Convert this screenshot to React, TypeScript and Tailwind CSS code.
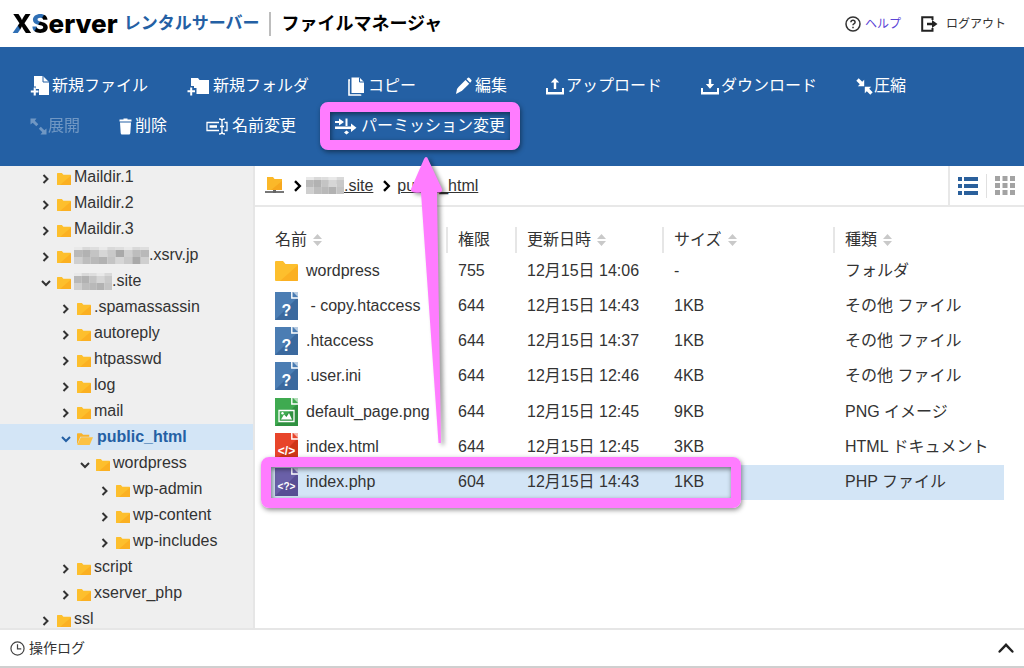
import React, { useState } from 'react';
import { clsx } from 'clsx';

type IconProps = { className?: string };

const Chevron: React.FC<IconProps & { dir?: 'right' | 'down' | 'up' }> = ({ className, dir = 'right' }) => (
  <svg viewBox="0 0 10 10" className={className} fill="none" stroke="currentColor" strokeWidth={dir === 'up' ? 1.5 : 2}>
    {dir === 'right' && <path d="M2.5 1 6.5 5 2.5 9" />}
    {dir === 'down' && <path d="M1 3 5 7 9 3" />}
    {dir === 'up' && <path d="M1 7.2 5 3 9 7.2" strokeLinecap="round" />}
  </svg>
);

const Folder: React.FC<IconProps> = ({ className }) => (
  <svg viewBox="0 0 23 20" className={className} preserveAspectRatio="none">
    <path d="M0 1Q0 0 1 0H8L10.500 3H22Q23 3 23 4V19Q23 20 22 20H1Q0 20 0 19Z" fill="#fdbf2d" />
    <path d="M23 4V19Q23 20 22 20H5Z" fill="#fbb022" />
  </svg>
);

const FolderOpen: React.FC<IconProps> = ({ className }) => (
  <svg viewBox="0 0 17 14" className={className}>
    <path d="M0 13V1.500Q0 .8.8.8H5L6.500 2.500H13V4.500H3.500L0 13Z" fill="#f9b32a" />
    <path d="M4 5.200H17L13.500 13.500H.3Z" fill="#fcc244" />
  </svg>
);

const RootFolder: React.FC<IconProps> = ({ className }) => (
  <svg viewBox="0 0 19 17" className={className}>
    <path d="M2 0H8L9.500 2H17V13H2Z" fill="#fbb829" />
    <path d="M17 4V13H6Z" fill="#f7a81e" />
    <path d="M0 14H19V16H0Z" fill="#777" />
    <path d="M8 13H11V16H8Z" fill="#666" />
  </svg>
);

const NewFileIcon = () => (
  <svg viewBox="0 0 20 22" className="h-[22px] w-5" fill="currentColor">
    <path d="M4 1H13L19 7V20H9V14H6V11.500H4Z" />
    <path d="M13 1V7H19" fill="none" stroke="#2460a4" strokeWidth="1" />
    <path d="M3.700 12.500H5.800V15.500H8.500V17.500H5.800V20.500H3.700V17.500H.8V15.500H3.700Z" />
  </svg>
);

const NewFolderIcon = () => (
  <svg viewBox="0 0 23 20" className="h-5 w-[23px]" fill="currentColor">
    <path d="M4 2H11L12.500 4H22V18H9.500V12H7V10H4Z" />
    <path d="M3.200 11.500H5.200V14.300H8V16.300H5.200V19.500H3.200V16.300H.5V14.300H3.200Z" />
  </svg>
);

const CopyIcon = () => (
  <svg viewBox="0 0 17 19" className="h-[19px] w-[17px]">
    <path d="M3.500.500H11.500L16 5V16H3.500Z" fill="currentColor" />
    <path d="M11.500.500V5H16" fill="none" stroke="#2460a4" />
    <path d="M2 3H1V18H12.500V17.500" fill="none" stroke="currentColor" strokeWidth="1.600" />
  </svg>
);

const EditIcon = () => (
  <svg viewBox="0 0 17 18" className="h-[18px] w-[17px]" fill="currentColor">
    <path d="M3.500 10 10.500 3 14.200 6.700 7 13.800 1 17 2 12Z" />
    <path d="M11.500 2 13 .8Q13.800.2 14.500 1L16.200 2.800Q17 3.600 16.200 4.400L15.100 5.700Z" />
  </svg>
);

const TrayIcon: React.FC<{ up?: boolean }> = ({ up }) => (
  <svg viewBox="0 0 18 18" className="size-[18px]" fill="currentColor">
    <path d="M0 11H2V15H16V11H18V17.500H0Z" />
    {up ? <path d="M9 1 13.200 5.500H10.200V12H7.800V5.500H4.800Z" /> : <path d="M7.800 2H10.200V7H13.200L9 11.800 4.800 7H7.800Z" />}
  </svg>
);

const CompressIcon = () => (
  <svg viewBox="0 0 17 17" className="size-[17px]" fill="currentColor">
    <path d="M8.200 8.200H1.800L3.800 6.200.3 2.700 2.700.3 6.200 3.800 8.200 1.800Z" />
    <path d="M8.800 8.800H15.200L13.200 10.800 16.700 14.300 14.300 16.700 10.800 13.200 8.800 15.200Z" />
  </svg>
);

const ExpandIcon = () => (
  <svg viewBox="0 0 17 17" className="size-[17px]" fill="currentColor">
    <path d="M.5.500H6.500L4.800 2.700 8.300 6.200 6.300 8.200 2.700 4.800.5 6.500Z" />
    <path d="M16.500 16.500H10.500L12.300 14.300 8.800 10.800 10.800 8.800 14.300 12.300 16.500 10.500Z" />
  </svg>
);

const TrashIcon = () => (
  <svg viewBox="0 0 13 17" className="h-[17px] w-[13px]" fill="currentColor">
    <path d="M4.500 1.500V.5H8.500V1.500H12.500V3.500H.5V1.500Z" />
    <path d="M1 4.500H12L11.300 15Q11.200 16.500 10 16.500H3Q1.800 16.500 1.700 15Z" />
  </svg>
);

const RenameIcon = () => (
  <svg viewBox="0 0 22 17" className="h-[17px] w-[22px]" fill="none" stroke="currentColor" strokeWidth="1.300">
    <path d="M13 4.500H1V12.500H13M18.500 4.500H21V12.500H18.500" />
    <path d="M3.500 8.500H11" strokeWidth="2.600" />
    <path d="M13 1Q16 1 16 3V14Q16 16 13 16M19 1Q16 1 16 3M16 14Q16 16 19 16M14 8.500H18" />
  </svg>
);

const PermissionIcon = () => (
  <svg viewBox="0 0 22 18" className="h-[18px] w-[22px]" fill="currentColor">
    <path d="M0 4H4V1.500L9 5 4 8.500V6H0ZM10.500 1.500H12.500V9H10.500Z" />
    <path d="M0 9.500H16V6.500L21.500 10.800 16 15V12H0ZM11.500 13.500 14 15.500 11.500 17.500 9 15.500Z" />
  </svg>
);

const HelpIcon = () => (
  <svg viewBox="0 0 16 16" className="size-4" fill="none" stroke="#333" strokeWidth="1.500">
    <circle cx="8" cy="8" r="7" />
    <path d="M5.900 6.300Q6 4.300 8 4.300T10.100 6.200Q10.100 7.300 8.900 7.900 8 8.400 8 9.300M8 10.700V12.200" />
  </svg>
);

const LogoutIcon = () => (
  <svg viewBox="0 0 17 16" className="h-4 w-[17px]">
    <path d="M11.500 4V1.200H1.200V14.800H11.500V12" fill="none" stroke="#222" strokeWidth="2" />
    <path d="M6 6.800H11V4L16.500 8 11 12V9.200H6Z" fill="#222" />
  </svg>
);

const ListIcon = () => (
  <svg viewBox="0 0 20 18" className="h-[18px] w-5" fill="#2a609c">
    <path d="M0 0H4V4H0ZM6 0H20V4H6ZM0 7H4V11H0ZM6 7H20V11H6ZM0 14H4V18H0ZM6 14H20V18H6Z" />
  </svg>
);

const GridIcon = () => (
  <svg viewBox="0 0 20 19" className="h-[19px] w-5" fill="#a3a3a3">
    <path d="M0 0H5V5H0ZM7.500 0H12.500V5H7.500ZM15 0H20V5H15ZM0 7H5V12H0ZM7.500 7H12.500V12H7.500ZM15 7H20V12H15ZM0 14H5V19H0ZM7.500 14H12.500V19H7.500ZM15 14H20V19H15Z" />
  </svg>
);

const SortIcon = () => (
  <svg viewBox="0 0 9 12" className="h-3 w-[9px]" fill="#c9c9c9">
    <path d="M4.500 0 9 5H0ZM4.500 12 0 7H9Z" />
  </svg>
);

type FileKind = 'folder' | 'other' | 'image' | 'html' | 'php';

const fileColors = {
  other: ['#4b7db3', '#3b699e'],
  image: ['#3faa50', '#2f9140'],
  html: ['#e8452a', '#cf3618'],
  php: ['#6a60a8', '#584e94'],
};

const FileIcon: React.FC<{ kind: FileKind }> = ({ kind }) => {
  if (kind === 'folder') return <Folder className="h-5 w-[23px]" />;
  const [base, shade] = fileColors[kind];
  return (
    <svg viewBox="0 0 23 28" className="h-7 w-[23px]">
      <path d="M0 0H23V28H0Z" fill={base} />
      <path d="M23 5V28H0Z" fill={shade} />
      <path d="M16.800 0V6H23" fill="none" stroke="#fff" strokeWidth="1.400" />
      <path d="M18 0 23 5V0Z" fill="#fff" fillOpacity=".6" />
      {kind === 'other' && <text x="11.500" y="24" textAnchor="middle" fontSize="16" fontWeight="700" fill="#fff">?</text>}
      {kind === 'html' && <text x="11.500" y="22" textAnchor="middle" fontSize="12" fontWeight="700" fill="#fff">&lt;/&gt;</text>}
      {kind === 'php' && <text x="11.500" y="22" textAnchor="middle" fontSize="10" fontWeight="700" fill="#fff">&lt;?&gt;</text>}
      {kind === 'image' && (
        <g>
          <path d="M4 12.500H19V23.500H4Z" fill="none" stroke="#fff" strokeWidth="1.300" />
          <path d="M6 21.500 9 16.500 11.500 19 14 15 17 21.500Z" fill="#fff" />
          <circle cx="7.500" cy="15.300" r="1.200" fill="#fff" />
        </g>
      )}
    </svg>
  );
};

// pixelated cover for private names
const shades = ['#c4c4c4', '#a9a9a9', '#b9b9b9', '#d6d6d6', '#cfcfcf', '#b2b2b2', '#c9c9c9', '#bdbdbd'];

const Mosaic: React.FC<{ cols: number; className: string }> = ({ cols, className }) => (
  <svg viewBox={`0 0 ${cols * 8} 17`} className={className} preserveAspectRatio="none">
    {Array.from({ length: cols * 3 }, (_, i) => {
      const row = Math.floor(i / cols);
      const col = i % cols;
      const fill = row === 0 ? ['#e9e9e9', '#d9d9d9', '#dedede'][col % 3] : shades[(col * 3 + row * 2) % 8];
      return <rect key={i} x={col * 8} y={[0, 3, 10][row]} width="8" height="7" fill={fill} />;
    })}
  </svg>
);

interface TreeNode {
  name: string;
  level: 0 | 1 | 2 | 3;
  open?: boolean;
  masked?: 'long' | 'short';
}

const tree: TreeNode[] = [
  { name: 'Maildir.1', level: 0 },
  { name: 'Maildir.2', level: 0 },
  { name: 'Maildir.3', level: 0 },
  { name: '.xsrv.jp', level: 0, masked: 'long' },
  { name: '.site', level: 0, open: true, masked: 'short' },
  { name: '.spamassassin', level: 1 },
  { name: 'autoreply', level: 1 },
  { name: 'htpasswd', level: 1 },
  { name: 'log', level: 1 },
  { name: 'mail', level: 1 },
  { name: 'public_html', level: 1, open: true },
  { name: 'wordpress', level: 2, open: true },
  { name: 'wp-admin', level: 3 },
  { name: 'wp-content', level: 3 },
  { name: 'wp-includes', level: 3 },
  { name: 'script', level: 1 },
  { name: 'xserver_php', level: 1 },
  { name: 'ssl', level: 0 },
];

const indents = ['pl-[41px]', 'pl-[61px]', 'pl-[80px]', 'pl-[100px]'];

const actions = [
  { label: '新規ファイル', icon: <NewFileIcon />, box: 'w-[22px]' },
  { label: '新規フォルダ', icon: <NewFolderIcon />, box: 'w-[26px]' },
  { label: 'コピー', icon: <CopyIcon />, box: 'w-5' },
  { label: '編集', icon: <EditIcon />, box: 'w-5' },
  { label: 'アップロード', icon: <TrayIcon up />, box: 'w-5' },
  { label: 'ダウンロード', icon: <TrayIcon />, box: 'w-5' },
  { label: '圧縮', icon: <CompressIcon />, box: 'w-[18px]' },
  { label: '展開', icon: <ExpandIcon />, box: 'w-[18px]', disabled: true },
  { label: '削除', icon: <TrashIcon />, box: 'w-4' },
  { label: '名前変更', icon: <RenameIcon />, box: 'w-[26px]' },
  { label: 'パーミッション変更', icon: <PermissionIcon />, box: 'w-[26px]', marked: true },
];

const files: { name: string; perm: string; date: string; size: string; type: string; kind: FileKind }[] = [
  { name: 'wordpress', perm: '755', date: '12月15日 14:06', size: '-', type: 'フォルダ', kind: 'folder' },
  { name: ' - copy.htaccess', perm: '644', date: '12月15日 14:43', size: '1KB', type: 'その他 ファイル', kind: 'other' },
  { name: '.htaccess', perm: '644', date: '12月15日 14:37', size: '1KB', type: 'その他 ファイル', kind: 'other' },
  { name: '.user.ini', perm: '644', date: '12月15日 12:46', size: '4KB', type: 'その他 ファイル', kind: 'other' },
  { name: 'default_page.png', perm: '644', date: '12月15日 12:45', size: '9KB', type: 'PNG イメージ', kind: 'image' },
  { name: 'index.html', perm: '644', date: '12月15日 12:45', size: '3KB', type: 'HTML ドキュメント', kind: 'html' },
  { name: 'index.php', perm: '604', date: '12月15日 14:43', size: '1KB', type: 'PHP ファイル', kind: 'php' },
];

const columns = [
  { label: '名前', width: 'w-[182px]', sortable: true },
  { label: '権限', width: 'w-[69px]' },
  { label: '更新日時', width: 'w-[147px]', sortable: true },
  { label: 'サイズ', width: 'w-[171px]', sortable: true },
  { label: '種類', width: '', sortable: true },
];

const frame =
  'pointer-events-none absolute z-10 rounded-lg border-[10px] border-[#ff7cff] shadow-[1px_2px_5px_rgba(0,0,0,0.45),inset_1px_2px_5px_rgba(0,0,0,0.5)]';

const Header = () => (
  <header className="flex h-[47px] shrink-0 items-center justify-between bg-white pr-[18px] pl-3">
    <h1 className="flex items-center font-bold whitespace-nowrap text-black">
      <span className="font-['Inter',sans-serif] text-[26px] leading-8 font-extrabold">
        <span className="bg-linear-to-tr from-[#2f6fb5] from-35% to-black to-40% bg-clip-text text-transparent">X</span>
        <span className="bg-linear-to-br from-[#2f6fb5] from-45% to-black to-50% bg-clip-text text-transparent">S</span>
        erver
      </span>
      <span className="ml-1.5 text-[17px] text-[#2460a4]">レンタルサーバー</span>
      <span className="mx-2.5 h-6 w-0.5 bg-[#bdbdbd]" />
      <span className="text-lg">ファイルマネージャ</span>
    </h1>
    <nav className="flex items-center gap-5 text-xs">
      <a href="#help" className="flex items-center gap-1 text-[#5b45d6]">
        <HelpIcon />
        ヘルプ
      </a>
      <a href="#logout" className="flex items-center gap-2 text-[#333]">
        <LogoutIcon />
        ログアウト
      </a>
    </nav>
  </header>
);

const Toolbar = () => (
  <div className="flex h-[119px] shrink-0 flex-wrap content-start gap-x-[39px] gap-y-4 bg-[#2460a4] pt-[27px] pr-16 pl-[30px] text-white">
    {actions.map((a) => (
      <button
        key={a.label}
        type="button"
        disabled={a.disabled}
        className={clsx('relative flex h-6 items-center text-base whitespace-nowrap', a.disabled && 'opacity-35')}
      >
        <span className={clsx('shrink-0', a.box)}>{a.icon}</span>
        {a.label}
        {a.marked && <span className={clsx(frame, '-inset-x-[15px] -inset-y-3')} />}
      </button>
    ))}
  </div>
);

const Sidebar: React.FC<{ current: string; onSelect: (name: string) => void }> = ({ current, onSelect }) => (
  <aside className="w-[255px] shrink-0 overflow-hidden border-r-2 border-[#e6e6e6] bg-[#efefef]">
    <ul className="-mt-0.5">
      {tree.map((node) => {
        const selected = node.name === current;
        return (
          <li key={node.name}>
            <button
              type="button"
              onClick={() => onSelect(node.name)}
              className={clsx(
                'flex h-[26px] w-full items-center text-base whitespace-nowrap',
                indents[node.level],
                selected ? 'bg-[#d3e5f6] font-bold text-[#2460a4]' : 'text-[#333]'
              )}
            >
              <Chevron dir={node.open ? 'down' : 'right'} className="mt-1 mr-1.5 size-2.5" />
              {selected ? <FolderOpen className="mt-1 mr-1 h-3.5 w-4" /> : <Folder className="mt-1 mr-[3px] h-3 w-3.5" />}
              {node.masked === 'long' && <Mosaic cols={9} className="h-[17px] w-[75px]" />}
              {node.masked === 'short' && <Mosaic cols={5} className="h-[17px] w-[38px]" />}
              {node.name}
            </button>
          </li>
        );
      })}
    </ul>
  </aside>
);

const Breadcrumb = () => (
  <div className="flex h-[41px] shrink-0 border-b-2 border-[#e8e8e8]">
    <nav className="flex flex-1 items-center pl-2.5 text-base text-[#333]">
      <RootFolder className="h-[17px] w-[19px]" />
      <Chevron className="mr-0.5 ml-2 size-3 text-black" />
      <Mosaic cols={5} className="h-[17px] w-[38px]" />
      <a href="#site" className="underline">.site</a>
      <Chevron className="mr-1 ml-2 size-3 text-black" />
      <a href="#public_html" className="underline">public_html</a>
    </nav>
    <div className="flex w-[76px] items-center border-l-2 border-[#e8e8e8] pl-2">
      <button type="button" aria-label="リスト表示">
        <ListIcon />
      </button>
      <span className="mx-2 h-6 w-px bg-[#e0e0e0]" />
      <button type="button" aria-label="アイコン表示">
        <GridIcon />
      </button>
    </div>
  </div>
);

const FileTable: React.FC<{ selected: string; onSelect: (name: string) => void }> = ({ selected, onSelect }) => (
  <div className="pt-5 pr-5 pl-2.5">
    <table className="h-[273px] w-full table-fixed text-left text-base text-[#333]">
      <thead>
        <tr className="h-[26px]">
          {columns.map((col, i) => (
            <th
              key={col.label}
              scope="col"
              className={clsx('p-0 pl-2.5 font-normal', col.width, i > 0 && 'border-l-2 border-[#e6e6e6]')}
            >
              <span className="flex items-center gap-1.5">
                {col.label}
                {col.sortable && <SortIcon />}
              </span>
            </th>
          ))}
        </tr>
      </thead>
      <tbody>
        {files.map((f) => (
          <tr
            key={f.name}
            onClick={() => onSelect(f.name)}
            className={clsx('h-[35px]', f.name === selected && 'bg-[#d3e5f6]')}
          >
            <td className="relative p-0 pl-2.5">
              <span className="flex items-center gap-2 whitespace-pre">
                <FileIcon kind={f.kind} />
                {f.name}
              </span>
              {f.kind === 'php' && <span className={clsx(frame, '-inset-y-2 -left-1 w-[480px]')} />}
            </td>
            <td className="p-0 pl-[11px]">{f.perm}</td>
            <td className="p-0 pl-[11px]">{f.date}</td>
            <td className="p-0 pl-[11px]">{f.size}</td>
            <td className="p-0 pl-[11px]">{f.type}</td>
          </tr>
        ))}
      </tbody>
    </table>
  </div>
);

export default function App() {
  const [folder, setFolder] = useState('public_html');
  const [file, setFile] = useState('index.php');

  return (
    <div className="relative flex h-screen flex-col overflow-hidden bg-white font-['Liberation_Sans','Noto_Sans_CJK_JP',sans-serif]">
      <Header />
      <Toolbar />
      <div className="flex min-h-0 flex-1">
        <Sidebar current={folder} onSelect={setFolder} />
        <main className="flex min-w-0 flex-1 flex-col">
          <Breadcrumb />
          <FileTable selected={file} onSelect={setFile} />
        </main>
      </div>
      <footer className="flex h-10 shrink-0 items-center justify-between border-y-2 border-t-[#e6e6e6] border-b-[#cfcfcf] pr-2.5 pl-2.5 text-sm text-[#333]">
        <button type="button" className="flex items-center gap-1">
          <svg viewBox="0 0 16 16" className="size-[15px]" fill="none" stroke="#444" strokeWidth="1.300">
            <circle cx="8" cy="8" r="7" />
            <path d="M8 3.500V8.500H12" />
          </svg>
          操作ログ
        </button>
        <button type="button" aria-label="開く">
          <Chevron dir="up" className="size-4 text-[#222]" />
        </button>
      </footer>
      <svg viewBox="0 0 40 290" className="pointer-events-none absolute top-[156px] left-[408px] z-20 h-[290px] w-10 drop-shadow-[3px_2px_2px_rgba(0,0,0,0.4)]">
        <path d="M18 1Q19.500 1 20 3L34 33Q35 37 29 36.500L33 287H30.500L13 36.500Q2 38 3 33L16 3Q17 1 18 1Z" fill="#ff7cff" />
      </svg>
    </div>
  );
}
